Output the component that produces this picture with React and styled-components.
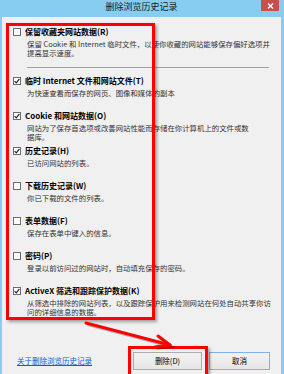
import React from 'react';
import styled, { createGlobalStyle } from 'styled-components';

const Global = createGlobalStyle`
  html, body { margin: 0; padding: 0; background: #f0f0f0; }
  body { font-family: "Noto Sans CJK SC", "Noto Sans", sans-serif; }
`;

const FRAME = '#86cdf1';
const RED = '#ff0000';

const Window = styled.div`
  width: 284px;
  height: 374px;
  box-sizing: border-box;
  display: flex;
  flex-direction: column;
  background: ${FRAME};
  padding: 0 3px 0 2px;
  overflow: hidden;
`;

const TitleBar = styled.div`
  height: 17px;
  flex: none;
  display: grid;
  grid-template-columns: 1fr auto 1fr;
  align-items: start;
`;

const TitleText = styled.div`
  grid-column: 2;
  font-size: 9px;
  line-height: 14px;
  color: #1a1a1a;
  white-space: nowrap;
`;

const CloseButton = styled.div`
  grid-column: 3;
  justify-self: end;
  margin-right: 2px;
  width: 18px;
  height: 11px;
  background: #c8504b;
  display: grid;
  place-items: center;
`;

const Body = styled.div`
  position: relative;
  flex: 1;
  background: #f0f0f0;
  overflow: hidden;
  display: flex;
  flex-direction: column;
`;

const List = styled.div`
  flex: none;
  display: flex;
  flex-direction: column;
  padding: 10px 0 0 11px;
`;

const Item = styled.div`
  height: 35px;
  display: grid;
  grid-template-columns: 8px auto;
  column-gap: 4px;
  align-content: start;
`;

const Box = styled.span`
  width: 8px;
  height: 8px;
  box-sizing: border-box;
  margin-top: 1px;
  border: 1px solid #6d6d6d;
  background: #fff;
  display: grid;
  place-items: center;
`;

const ItemTitle = styled.div`
  font-size: 8px;
  font-weight: bold;
  line-height: 10px;
  color: #000;
  white-space: nowrap;
`;

const Desc = styled.div`
  grid-column: 2;
  margin: 1.5px 0 0 2px;
  font-size: 7.4px;
  line-height: 9.5px;
  color: #333;
  white-space: nowrap;
`;

const Separator = styled.div`
  height: 1px;
  width: 242px;
  margin: 5px 0 8px 14px;
  background: #a0a0a0;
`;

const Footer = styled.div`
  flex: 1;
  display: flex;
  align-items: flex-end;
  padding: 0 11px 4px 15px;
`;

const HelpLink = styled.a`
  margin-right: auto;
  font-size: 7.5px;
  line-height: 18px;
  color: #0066cc;
  text-decoration: underline;
  white-space: nowrap;
`;

const Button = styled.div`
  width: ${p => p.$w}px;
  height: 18px;
  box-sizing: border-box;
  margin-left: ${p => p.$gap || 0}px;
  border: 1px solid ${p => (p.$focus ? '#7eb4ea' : '#acacac')};
  background: linear-gradient(#f2f2f2, #e6e6e6);
  font-size: 7.5px;
  line-height: 16px;
  text-align: center;
  color: #000;
`;

const RedBox = styled.div`
  position: absolute;
  left: ${p => p.$x}px;
  top: ${p => p.$y}px;
  width: ${p => p.$w}px;
  height: ${p => p.$h}px;
  box-sizing: border-box;
  border: 3px solid ${RED};
  box-shadow: 2px 2px 3px rgba(0, 0, 0, 0.35);
  pointer-events: none;
`;

const Overlay = styled.svg`
  position: absolute;
  left: 0;
  top: 0;
  pointer-events: none;
`;

const Check = () => (
  <svg width="6" height="6" viewBox="0 0 6 6">
    <path d="M0.6 3.1 L2.3 4.8 L5.4 0.9" fill="none" stroke="#222" strokeWidth="1.2" />
  </svg>
);

const items = [
  { t: '临时 Internet 文件和网站文件(T)', c: true, d: ['为快速查看而保存的网页、图像和媒体的副本'] },
  { t: 'Cookie 和网站数据(O)', c: true, d: ['网站为了保存首选项或改善网站性能而存储在你计算机上的文件或数', '据库。'] },
  { t: '历史记录(H)', c: true, d: ['已访问网站的列表。'] },
  { t: '下载历史记录(W)', c: false, d: ['你已下载的文件的列表。'] },
  { t: '表单数据(F)', c: false, d: ['保存在表单中键入的信息。'] },
  { t: '密码(P)', c: false, d: ['登录以前访问过的网站时，自动填充保存的密码。'] },
  { t: 'ActiveX 筛选和跟踪保护数据(K)', c: true, d: ['从筛选中排除的网站列表，以及跟踪保护用来检测网站在何处自动共享你访', '问的详细信息的数据。'] },
];

const Row = ({ t, c, d }) => (
  <Item>
    <Box>{c && <Check />}</Box>
    <ItemTitle>{t}</ItemTitle>
    <Desc>
      {d.map((l, i) => (
        <div key={i}>{l}</div>
      ))}
    </Desc>
  </Item>
);

export default function App() {
  return (
    <>
      <Global />
      <Window>
        <TitleBar>
          <TitleText>删除浏览历史记录</TitleText>
          <CloseButton>
            <svg width="7" height="6" viewBox="0 0 7 6">
              <path d="M1 0.5 L6 5.5 M6 0.5 L1 5.5" stroke="#fff" strokeWidth="1.4" />
            </svg>
          </CloseButton>
        </TitleBar>
        <Body>
          <List>
            <Row
              t="保留收藏夹网站数据(R)"
              c={false}
              d={['保留 Cookie 和 Internet 临时文件，以使你收藏的网站能够保存偏好选项并', '提高显示速度。']}
            />
            <Separator />
            {items.map((it, i) => (
              <Row key={i} {...it} />
            ))}
          </List>
          <Footer>
            <HelpLink>关于删除浏览历史记录</HelpLink>
            <Button $w={69}>删除(D)</Button>
            <Button $w={61} $gap={7} $focus>取消</Button>
          </Footer>
          <RedBox $x={4} $y={6} $w={149} $h={297} />
          <RedBox $x={126} $y={329} $w={80} $h={34} />
          <Overlay width="279" height="357" viewBox="0 0 279 357">
            <g transform="translate(1.5 1.5)" stroke="rgba(0,0,0,0.25)" strokeWidth="3" fill="none">
              <path d="M84 306 L168 328" />
              <path d="M156 319 L168 328 L153 330" />
            </g>
            <g stroke={RED} strokeWidth="3" fill="none" strokeLinecap="round" strokeLinejoin="round">
              <path d="M84 306 L168 328" />
              <path d="M156 319 L168 328 L153 330" />
            </g>
          </Overlay>
        </Body>
      </Window>
    </>
  );
}
